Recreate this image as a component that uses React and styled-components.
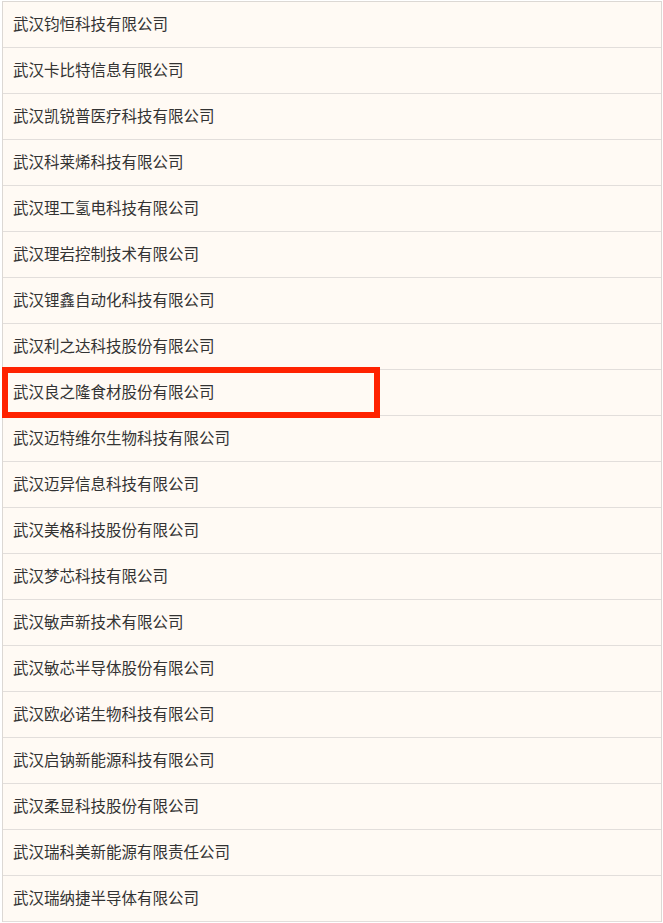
import React from "react";
import styled, { createGlobalStyle } from "styled-components";

const companies = [
  "武汉钧恒科技有限公司",
  "武汉卡比特信息有限公司",
  "武汉凯锐普医疗科技有限公司",
  "武汉科莱烯科技有限公司",
  "武汉理工氢电科技有限公司",
  "武汉理岩控制技术有限公司",
  "武汉锂鑫自动化科技有限公司",
  "武汉利之达科技股份有限公司",
  "武汉良之隆食材股份有限公司",
  "武汉迈特维尔生物科技有限公司",
  "武汉迈异信息科技有限公司",
  "武汉美格科技股份有限公司",
  "武汉梦芯科技有限公司",
  "武汉敏声新技术有限公司",
  "武汉敏芯半导体股份有限公司",
  "武汉欧必诺生物科技有限公司",
  "武汉启钠新能源科技有限公司",
  "武汉柔显科技股份有限公司",
  "武汉瑞科美新能源有限责任公司",
  "武汉瑞纳捷半导体有限公司",
];

const highlighted = 8;

const GlobalStyle = createGlobalStyle`
  html, body {
    margin: 0;
    padding: 0;
    background: #ffffff;
  }
  body {
    font-family: "Noto Sans CJK SC", "Noto Sans", sans-serif;
  }
`;

const Page = styled.div`
  padding: 1px 0 0 2px;
  width: 660px;
`;

const Table = styled.div`
  display: flex;
  flex-direction: column;
  border-left: 1px solid #dcd8d4;
  border-right: 1px solid #dcd8d4;
  border-top: 1px solid #dcd8d4;
  background-color: #fffaf4;
`;

const Row = styled.div`
  position: relative;
  height: 46px;
  box-sizing: border-box;
  border-bottom: 1px solid #e2dedb;
  display: flex;
  align-items: center;
  padding: 0 0 3px 10px;
  font-size: 15.5px;
  color: #333333;
`;

const Mark = styled.div`
  position: absolute;
  left: -1px;
  top: -3px;
  width: 366px;
  height: 39px;
  border: 6px solid #ff2200;
  pointer-events: none;
`;

const App = () => {
  return (
    <>
      <GlobalStyle />
      <Page>
        <Table>
          {companies.map((name, index) => (
            <Row key={index}>
              {name}
              {index === highlighted && <Mark />}
            </Row>
          ))}
        </Table>
      </Page>
    </>
  );
};

export default App;
